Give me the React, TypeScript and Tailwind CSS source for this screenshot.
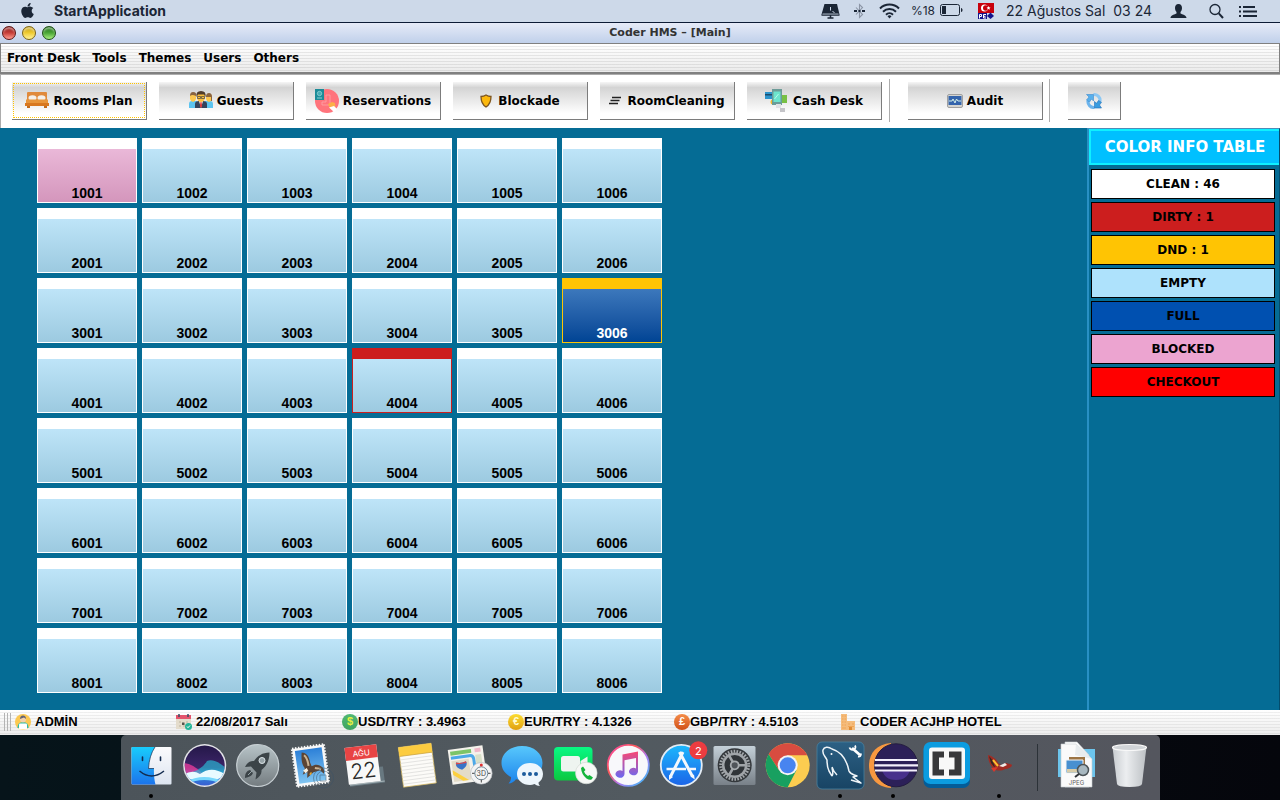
import type { ReactNode } from "react";
import { FaApple, FaBluetoothB } from "react-icons/fa";

const UI = "font-['DejaVu_Sans',Verdana,sans-serif]";

/* ---------- system menu bar ---------- */

function SystemBar() {
  return (
    <header className="flex h-[23px] shrink-0 items-center border-b border-[#0c1b36] bg-[#cdd9e9] pr-[23px] pb-px pl-[19px] font-['Inter',sans-serif] text-[14px] text-[#1b2636]">
      <FaApple className="mr-[18px] size-[17px]" aria-hidden="true" />
      <span className="font-bold">StartApplication</span>
      <div className="ml-auto flex items-center">
        <svg className="mr-[14px] h-4 w-[19px]" viewBox="0 0 19 16" aria-hidden="true">
          <path d="M3.500 1h12.500l2.500 10.500h-18z" fill="#1b2636" />
          <path d="M0.500 12h18M9.500 12v2.500M6.500 15h6" stroke="#1b2636" strokeWidth="1.500" />
          <path d="M9.500 4v3.500M11.500 8l2 2" stroke="#cdd9e9" strokeWidth="1" />
          <path d="M1.500 11h16" stroke="#cdd9e9" strokeWidth=".8" />
        </svg>
        <div className="mr-[14px] flex w-[11px] justify-center">
          <svg className="h-4 w-[11px]" viewBox="0 0 11 16" fill="none" aria-hidden="true">
            <path d="M2 4.500l6.500 7-3 3v-13l3 3-6.500 7" stroke="#8b95a5" strokeWidth="1.100" />
            <path d="M0 8h3M4.500 8h2M8 8h3" stroke="#1b2636" strokeWidth="2" />
          </svg>
        </div>
        <svg className="mr-[11px] h-4 w-[21px]" viewBox="0 0 21 16" fill="none" stroke="#1b2636" strokeWidth="2" aria-hidden="true">
          <path d="M1 5.500a13.500 13.500 0 0 1 19 0M4 8.700a9.300 9.300 0 0 1 13 0M7 11.700a5 5 0 0 1 7 0" />
          <path d="M10.500 15.500l-2-2.300a3 3 0 0 1 4 0z" fill="#1b2636" stroke="none" />
        </svg>
        <span className="mr-[5px] text-[12px]">%18</span>
        <svg className="mr-[15px] h-[13px] w-[23px]" viewBox="0 0 23 13" aria-hidden="true">
          <rect x="0.500" y="0.500" width="19" height="11" rx="2" fill="none" stroke="#1b2636" />
          <rect x="2" y="2" width="4" height="8" fill="#1b2636" />
          <path d="M21 4c2 0 2 4 0 4z" fill="#1b2636" />
        </svg>
        <svg className="mr-3 size-4" viewBox="0 0 16 16" aria-hidden="true">
          <rect width="16" height="10" fill="#c8000c" />
          <circle cx="6.500" cy="5" r="3.500" fill="#fff" />
          <circle cx="7.700" cy="5" r="2.700" fill="#c8000c" />
          <path d="M10.500 3l.6 1.300 1.400.1-1 1 .3 1.400-1.300-.7-1.200.7.3-1.400-1-1 1.300-.1z" fill="#fff" />
          <path d="M0 10h9v6H0z" fill="#14148c" />
          <path d="M9 10h7v6H9z" fill="#cdd9e9" />
          <path d="M1.500 15.500v-4h2v2h-2M8 11.500H5.500v3.500H8M5.500 13.300h2" stroke="#fff" fill="none" />
          <path d="M12.500 9.500l3.500 3.500-3.500 3-3.500-3z" fill="#14148c" />
        </svg>
        <span className="mr-[18px] whitespace-pre">22 Ağustos Sal  03 24</span>
        <svg className="mr-[22px] h-4 w-[17px]" viewBox="0 0 17 16" fill="#1b2636" aria-hidden="true">
          <path d="M8.500 1c2.500 0 3.500 1.700 3.500 4 0 2-.8 3.200-1.500 4v1.500c1.500 1 6 1.500 6 4.500H.500c0-3 4.500-3.500 6-4.500V9C5.800 8.200 5 7 5 5c0-2.300 1-4 3.500-4z" />
        </svg>
        <svg className="mr-[15px] h-4 w-[15px]" viewBox="0 0 15 16" fill="none" stroke="#1b2636" aria-hidden="true">
          <circle cx="6" cy="6.500" r="5" strokeWidth="1.300" />
          <path d="M9.800 10.300L14 15" strokeWidth="2" />
        </svg>
        <svg className="h-4 w-[18px]" viewBox="0 0 18 16" stroke="#1b2636" strokeWidth="2" aria-hidden="true">
          <path d="M0 4h2M0 8.500h2M0 13h2M4 4h12M4 8.500h14M4 13h14" />
        </svg>
      </div>
    </header>
  );
}

/* ---------- window frame ---------- */

const lights = [
  { label: "Close", cls: "from-[#8c1414] via-[#c8403c] to-[#ff9c94] border-[#5c1414]" },
  { label: "Minimize", cls: "from-[#c09a10] via-[#f0cc30] to-[#fff290] border-[#7c6414]" },
  { label: "Zoom", cls: "from-[#1c6c14] via-[#4ca838] to-[#a8f080] border-[#1c4c14]" },
];

function TitleBar() {
  return (
    <div className="flex h-5 shrink-0 items-center bg-linear-to-b from-[#e6ebf8] to-[#c0d0ea]">
      <div className="flex w-[60px] gap-[6px] pl-[2px]">
        {lights.map((l) => (
          <button
            key={l.label}
            aria-label={l.label}
            className={"size-[14px] rounded-full border bg-linear-to-b shadow-[inset_0_3px_2px_-1px_rgba(255,255,255,0.5)] " + l.cls}
          />
        ))}
      </div>
      <h1 className={UI + " flex-1 text-center text-[11px] font-bold text-[#333]"}>Coder HMS – [Main]</h1>
    </div>
  );
}

function MenuBar() {
  return (
    <nav className={UI + " flex h-[31px] shrink-0 items-center gap-3 border-t border-r border-b-2 border-l border-[#808080] bg-[repeating-linear-gradient(to_bottom,transparent_0_2px,rgba(0,0,0,0.08)_2px_3px),linear-gradient(to_bottom,#ffffff,#ebebeb)] px-[6px] text-[12px] font-bold text-black"}>
      {["Front Desk", "Tools", "Themes", "Users", "Others"].map((m) => (
        <button key={m}>{m}</button>
      ))}
    </nav>
  );
}

/* ---------- toolbar ---------- */

const BedIcon = (
  <svg className="h-6 w-6" viewBox="0 0 24 24">
    <path d="M2 4q0-1 1-1h18q1 0 1 1v9H2z" fill="#e08a3c" />
    <ellipse cx="7.500" cy="9" rx="4" ry="2.700" fill="#f4f0ea" />
    <ellipse cx="16.500" cy="9" rx="4" ry="2.700" fill="#f4f0ea" />
    <rect x="1" y="10.500" width="22" height="4" fill="#e8963c" />
    <path d="M0 14h24v3H0z" fill="#d87820" />
    <path d="M2 17h3v2H2zM19 17h3v2h-3z" fill="#c46c1c" />
  </svg>
);

const GuestsIcon = (
  <svg className="h-6 w-6" viewBox="0 0 24 24">
    <path d="M0 19v-4q0-3 3-3h5v7zM24 19v-4q0-3-3-3h-5v7z" fill="#5cc4f0" />
    <path d="M1 7q0-3 3-3t3 3v3q-1 3-3 3t-3-3zM17 8q0-3 3-3t3 3v2q-1 3-3 3t-3-3z" fill="#fcc850" />
    <path d="M1 7q0-4 3-4 4 0 3 4-4-2-6 0zM17 8q0-4 3-4t3 4v4h-1V8h-4z" fill="#8a6440" />
    <path d="M6 19v-4q0-3 4-3h4q4 0 4 3v4z" fill="#34445c" />
    <path d="M10 12h4l-2 7z" fill="#fff" />
    <path d="M11.500 13h1l.7 4-1.200 2-1.200-2z" fill="#d83838" />
    <path d="M8 6q0-3 4-3t4 3v3q-1 4-4 4T8 9z" fill="#fcc040" />
    <path d="M7.500 8q-1-6 4.500-6t4.500 6L15 5.500H9z" fill="#503c2c" />
    <path d="M8.500 7.500h3v2h-3zM12.500 7.500h3v2h-3z" fill="none" stroke="#444" strokeWidth=".7" />
  </svg>
);

const ReservationsIcon = (
  <svg className="h-6 w-6" viewBox="0 0 24 24">
    <circle cx="12" cy="12" r="12" fill="#ff747c" />
    <path d="M11 6h4v10H7v-3h4z" fill="none" stroke="#fca4a8" strokeWidth=".8" />
    <path d="M0 0h9v11H0z" fill="#1c8c98" />
    <circle cx="4.500" cy="4.500" r="2.200" fill="#48acb4" stroke="#b0e0e4" strokeWidth=".6" />
    <path d="M2 9h5" stroke="#8cd0d4" />
    <path d="M13 15l4-2 3 1 .5 5-5 1z" fill="#fcb048" />
    <path d="M14 18.500l5-1.500 3 3-3 3z" fill="#fff" />
  </svg>
);

const ShieldIcon = (
  <svg className="h-6 w-3" viewBox="0 0 12 24">
    <path d="M6 6c1.500 1 3 1.500 5 1.500 0 5-1 8-5 10.500C2 15.500 1 12.500 1 7.500 3 7.500 4.500 7 6 6z" fill="#fcb80c" stroke="#7c5420" strokeWidth="1.300" />
  </svg>
);

const SweepIcon = (
  <svg className="h-6 w-3" viewBox="0 0 12 24" stroke="#222" strokeWidth="1.500">
    <path d="M3 8.500h9M1.500 11.500h9M0 14.500h9" />
  </svg>
);

const CashIcon = (
  <svg className="h-6 w-6" viewBox="0 0 24 24">
    <path d="M0 3h9v7H0z" fill="#2c94cc" />
    <path d="M0 5h9v1.500H0z" fill="#1c4c6c" />
    <circle cx="8" cy="13" r="2.500" fill="#f8b828" />
    <path d="M14 6h8v8h-8z" fill="#78c044" />
    <path d="M7 0h10v16H7z" fill="#6c9c98" />
    <path d="M8.500 2.500h7v10.500h-7z" fill="#6ce4cc" />
    <path d="M9.500 10l4-5" stroke="#b4fcec" />
    <path d="M11 15h5v4h-5z" fill="#e0e0e4" />
    <path d="M15 19h5v4h-5z" fill="#c4c4c8" />
  </svg>
);

const AuditIcon = (
  <svg className="size-4" viewBox="0 0 16 16">
    <rect x=".5" y="1.500" width="15" height="13" rx="1.500" fill="#d4d4d0" stroke="#a0a0a0" />
    <rect x="1.500" y="3" width="13" height="9" fill="#3464ac" />
    <path d="M2 8h3l1-2 2 4 1.500-4L11 8h3" fill="none" stroke="#d4f0e8" />
  </svg>
);

const RefreshIcon = (
  <svg className="size-4" viewBox="0 0 16 16">
    <path d="M7.500 1.500a6 6 0 0 1 6.500 7" fill="none" stroke="#8cc8f4" strokeWidth="3" />
    <path d="M8.500 14.500a6 6 0 0 1-6.500-7" fill="none" stroke="#6cb4ec" strokeWidth="3" />
    <path d="M.5 1.500h7v6.500L5.500 6 3.500 9 .5 7 3 4z" fill="#58b0ec" stroke="#3c8cd0" strokeWidth=".6" />
    <path d="M15.500 15H8.500V8.500l2 1.800 2-2.800 3 1.800-2 2.700z" fill="#389ce0" stroke="#2470b8" strokeWidth=".6" />
  </svg>
);

function ToolButton({ icon, label, focused, gap = "gap-1" }: { icon: ReactNode; label: string; focused?: boolean; gap?: string }) {
  return (
    <button className="flex h-[38px] w-[135px] shrink-0 border-r border-b border-[#7c7c7c] bg-linear-to-b from-[#f6f6f6] via-[#d4d4d4] via-15% to-white to-85% p-px text-[12px] font-bold whitespace-nowrap text-black">
      <span className={"flex h-full w-full items-center justify-center border border-dotted " + gap + " " + (focused ? "border-[#ffc400]" : "border-transparent")}>
        {icon}
        {label}
      </span>
    </button>
  );
}

function Separator() {
  return <div className="-mt-[3px] h-[43px] w-px bg-[#acacac]" />;
}

function Toolbar() {
  return (
    <div className={UI + " flex h-[54px] shrink-0 items-start border-t border-l border-[#acacac] bg-white pt-[7px] pl-[11px]"}>
      <div className="mr-[7px] flex gap-3">
        <ToolButton icon={BedIcon} label="Rooms Plan" focused />
        <ToolButton icon={GuestsIcon} label="Guests" />
        <ToolButton icon={ReservationsIcon} label="Reservations" />
        <ToolButton icon={ShieldIcon} label="Blockade" gap="gap-[6px]" />
        <ToolButton icon={SweepIcon} label="RoomCleaning" gap="gap-[6px]" />
        <ToolButton icon={CashIcon} label="Cash Desk" />
      </div>
      <Separator />
      <div className="mr-[6px] ml-[18px]">
        <ToolButton icon={AuditIcon} label="Audit" />
      </div>
      <Separator />
      <button aria-label="Refresh" className="ml-[18px] flex h-[38px] w-[53px] items-center justify-center border-r border-b border-[#7c7c7c] bg-linear-to-b from-[#f6f6f6] via-[#d4d4d4] via-15% to-white to-85%">
        {RefreshIcon}
      </button>
    </div>
  );
}

/* ---------- rooms ---------- */

const frame: Record<string, string> = { "3006": "border-[#ffc403]", "4004": "border-[#cc1e1e]" };
const fill: Record<string, string> = {
  "1001": "from-[#eab8d8] to-[#d496bc] text-black",
  "3006": "from-[#3c78bc] to-[#004494] text-white",
};

function RoomGrid() {
  return (
    <div className="grid grid-cols-[repeat(6,100px)] content-start gap-[5px] pt-[10px] pl-[37px]">
      {[1, 2, 3, 4, 5, 6, 7, 8].flatMap((floor) =>
        [1, 2, 3, 4, 5, 6].map((n) => {
          const id = String(floor * 1000 + n);
          return (
            <button
              key={id}
              className={
                "flex h-[65px] items-end justify-center border border-t-11 bg-linear-to-b bg-origin-padding font-['Liberation_Sans',Arial,sans-serif] text-[14px] leading-[18px] font-bold " +
                (frame[id] ?? "border-white") + " " + (fill[id] ?? "from-[#bee4f8] to-[#9ccae0] text-black")
              }
            >
              {id}
            </button>
          );
        })
      )}
    </div>
  );
}

const legend = [
  { text: "CLEAN : 46", cls: "bg-white" },
  { text: "DIRTY : 1", cls: "bg-[#cc1e1e]" },
  { text: "DND : 1", cls: "bg-[#ffc403]" },
  { text: "EMPTY", cls: "bg-[#aee2fc]" },
  { text: "FULL", cls: "bg-[#0050b0]" },
  { text: "BLOCKED", cls: "bg-[#eca4d0]" },
  { text: "CHECKOUT", cls: "bg-[#ff0000]" },
];

function ColorInfo() {
  return (
    <aside className="w-[193px] shrink-0 border-t border-r border-l-2 border-t-[#4c8cb8] border-r-[#044c6c] border-l-[#2890c4]">
      <h2 className={UI + " flex h-9 items-center justify-center border-2 border-r-0 border-[#0ff0ff] bg-[#00c0ff] text-[15px] font-bold whitespace-nowrap text-white"}>
        COLOR INFO TABLE
      </h2>
      <ul className={UI + " flex flex-col gap-[3px] pt-1 pr-1 pl-[2px] text-[12px] font-bold text-black"}>
        {legend.map((l) => (
          <li key={l.text} className={"flex h-[30px] items-center justify-center border border-black " + l.cls}>
            {l.text}
          </li>
        ))}
      </ul>
    </aside>
  );
}

/* ---------- status bar ---------- */

function Coin({ from, to, mark, sign }: { from: string; to: string; mark: string; sign: string }) {
  return (
    <span className={"flex size-4 items-center justify-center rounded-full bg-linear-to-b text-[11px] " + from + " " + to + " " + mark}>
      {sign}
    </span>
  );
}

const AdminIcon = (
  <svg className="size-4" viewBox="0 0 16 16">
    <circle cx="8" cy="8" r="8" fill="#fcc850" />
    <path d="M2.500 14q0-6 5.500-6t5.500 6z" fill="#2cbca8" />
    <circle cx="8" cy="5.500" r="3" fill="#f4d0a8" />
    <path d="M5 5q0-3.500 3-3.500T11 5L9 3.500z" fill="#646474" />
    <rect x="4" y="9.500" width="8" height="6" rx="1" fill="#fff" />
  </svg>
);

const CalendarIcon = (
  <svg className="size-4" viewBox="0 0 16 16">
    <rect y="1" width="15" height="14" fill="#e4dccc" />
    <path d="M0 1h15v4H0z" fill="#e4546c" />
    <path d="M3 0v3M12 0v3" stroke="#344c64" strokeWidth="1.500" />
    <path d="M3 8h2M10 8h2M3 12h2M7 12h2" stroke="#d0c8b4" strokeWidth="2" />
    <path d="M6 8.500h2.500v2.500H6z" fill="#54544c" />
    <circle cx="12.500" cy="12.500" r="3.500" fill="#24b498" />
    <path d="M11 12.500l1 1.200 2-2.200" fill="none" stroke="#fff" />
  </svg>
);

const HotelIcon = (
  <svg className="size-4" viewBox="0 0 16 16">
    <path d="M1 0h6v16H1zM7 7h8v9H7z" fill="#f4bc7c" />
    <path d="M2 2h1.500M4.500 2H6M2 5h1.500M4.500 5H6M2 8h1.500M4.500 8H6M2 11h1.500M4.500 11H6M2 14h4M8 10h2M12 10h2M8 12.500h6" stroke="#f0a454" strokeWidth="1.200" />
    <path d="M9 13h3v3H9z" fill="#e08c34" />
  </svg>
);

function StatusItem({ icon, text, tight }: { icon: ReactNode; text: string; tight?: boolean }) {
  return (
    <div className={"flex w-[166px] items-center whitespace-nowrap " + (tight ? "" : "gap-1")}>
      {icon}
      {text}
    </div>
  );
}

function StatusBar() {
  return (
    <footer className="flex h-[25px] shrink-0 items-center bg-[repeating-linear-gradient(to_bottom,transparent_0_2px,rgba(0,0,0,0.06)_2px_3px),linear-gradient(to_bottom,#ffffff,#ececec)] pb-[2px] pl-1 font-['Liberation_Sans',Arial,sans-serif] text-[13px] font-bold text-black">
      <div className="h-[18px] w-[7px] bg-[repeating-linear-gradient(to_right,#b4b4b4_0_1px,transparent_1px_3px)]" />
      <div className="flex w-[165px] items-center gap-1 pl-1">
        {AdminIcon}
        ADMİN
      </div>
      <StatusItem icon={CalendarIcon} text="22/08/2017 Salı" />
      <StatusItem icon={<Coin from="from-[#50b874]" to="to-[#40a460]" mark="text-[#e4f040]" sign="$" />} text="USD/TRY : 3.4963" tight />
      <StatusItem icon={<Coin from="from-[#fcdc30]" to="to-[#e0a010]" mark="text-[#fffbd0]" sign="€" />} text="EUR/TRY : 4.1326" tight />
      <StatusItem icon={<Coin from="from-[#f48c48]" to="to-[#d05014]" mark="text-white" sign="£" />} text="GBP/TRY : 4.5103" tight />
      <StatusItem icon={HotelIcon} text="CODER ACJHP HOTEL" />
    </footer>
  );
}

/* ---------- dock ---------- */

const perforation = "M-16-19h32M16-19v38M16 19h-32M-16 19v-38";

const apps: { name: string; running?: boolean; art: ReactNode }[] = [
  {
    name: "Finder",
    running: true,
    art: (
      <>
        <defs>
          <linearGradient id="fi" x2="0" y2="1"><stop stopColor="#18ccfc" /><stop offset="1" stopColor="#1c74ec" /></linearGradient>
          <linearGradient id="fw" x2="0" y2="1"><stop stopColor="#fbfbfd" /><stop offset="1" stopColor="#dce4f0" /></linearGradient>
        </defs>
        <rect x="6.500" y="12" width="40" height="37.500" rx="1" fill="url(#fw)" />
        <path d="M7.500 12H30c-4 6-6 13-6.500 21.500H29c-.3 6 .2 11 1.500 16h-23q-1 0-1-1V13q0-1 1-1z" fill="url(#fi)" />
        <path d="M17.500 22v3.500M35.500 22v3.500" stroke="#142c50" strokeWidth="1.600" strokeLinecap="round" />
        <path d="M14.500 36q12 10 24.500 0" fill="none" stroke="#142c50" strokeWidth="1.500" />
        <path d="M30 12c-4 6-6 13-6.500 21.500H29" fill="none" stroke="#142c50" strokeWidth=".7" />
      </>
    ),
  },
  {
    name: "Siri",
    art: (
      <>
        <defs>
          <linearGradient id="si" x2="0" y2="1">
            <stop offset=".15" stopColor="#241848" /><stop offset=".5" stopColor="#3c2468" /><stop offset=".62" stopColor="#2c88d8" /><stop offset=".8" stopColor="#3c58d0" />
          </linearGradient>
          <clipPath id="sc"><circle cx="26.700" cy="30.500" r="20" /></clipPath>
        </defs>
        <circle cx="26.700" cy="30.500" r="21.500" fill="#e4e4e8" />
        <g clipPath="url(#sc)">
          <path d="M0 0h53v65H0z" fill="url(#si)" />
          <path d="M5 28q10 0 21 12H5z" fill="#f03c9c" opacity=".75" />
          <path d="M5 39q18-2 24-13 8-3 20 8v8z" fill="#28c0dc" opacity=".65" />
          <path d="M5 40q9-6 17-1 12-9 26 1-12 8-25 3-9 5-18-3z" fill="#e8faff" />
          <path d="M8 48q18-9 37 0" stroke="#78d8fc" strokeWidth="3" fill="none" />
        </g>
      </>
    ),
  },
  {
    name: "Launchpad",
    art: (
      <>
        <defs><linearGradient id="la" x2="0" y2="1"><stop stopColor="#b8c4c8" /><stop offset="1" stopColor="#747c80" /></linearGradient></defs>
        <circle cx="26.700" cy="30.500" r="21" fill="url(#la)" stroke="#c8d0d4" strokeWidth="1.200" />
        <path d="M38.500 17.500c-7 0-12 3.500-15.500 8.500-4-.5-7 2-9 6l6-.5 5.500 6-1 7c4-2.500 6.500-5.500 6-9.500 5-4 8-9.500 8-17.500z" fill="#3c4448" />
        <circle cx="31" cy="25.500" r="3" fill="#98a4a8" stroke="#dce4e8" strokeWidth="1" />
        <path d="M19 35c-4 1-5 4-5 8 4-1 7-2 8-5z" fill="#3c4448" />
        <path d="M17 40l4-4" stroke="#98a4a8" />
      </>
    ),
  },
  {
    name: "Mail",
    art: (
      <>
        <defs><linearGradient id="ma" x2="0" y2="1"><stop stopColor="#2c80d8" /><stop offset="1" stopColor="#80c4f0" /></linearGradient></defs>
        <g transform="translate(26.500 30.500) rotate(-8)">
          <path d="M-16-19h32v38h-32z" fill="#f8f8f8" />
          <path d={perforation} fill="none" stroke="#f8f8f8" strokeWidth="2.500" strokeDasharray="1.500 1.500" />
          <path d="M-13.500-16.500h27v33h-27z" fill="url(#ma)" />
          <path d="M-7-14c5 1 7 5 7 11l1 4c4-2 8-1 11 3 1 2 1 4 0 6l-3-4-7 1-7 5 1-6-5 2 3-6C-9-3-8-9-7-14z" fill="#5c4434" />
          <path d="M-5-11c3 3 3 7 3 11M4 3l6 2" stroke="#ccb494" strokeWidth="2" fill="none" />
          <path d="M-8 4l4-2 1 3-3 2z" fill="#f8f0e0" />
          <path d="M-2 9l2-2" stroke="#e8a830" strokeWidth="1.500" />
        </g>
        <g fill="none" stroke="#3c5468" strokeWidth="1" opacity=".5"><circle cx="39.500" cy="43" r="10" /><circle cx="39.500" cy="43" r="7" /><path d="M36 40h6v6h-6z" /></g>
      </>
    ),
  },
  {
    name: "Calendar",
    art: (
      <g transform="translate(25.500 29) rotate(-7)">
        <path d="M-15 3L-15 21H20V5z" fill="#687880" />
        <path d="M-15 19.500h35" stroke="#a8b4b8" />
        <path d="M-16-18h32v37h-32z" fill="#f8f8f8" />
        <path d="M-16-18h32v13h-32z" fill="#e84444" />
        <text y="-8" textAnchor="middle" className="font-['Inter',sans-serif] text-[8px]" fill="#fff">AĞU</text>
        <text y="14" textAnchor="middle" className="font-['Inter',sans-serif] text-[21px] font-light" fill="#282828">22</text>
      </g>
    ),
  },
  {
    name: "Notes",
    art: (
      <g transform="translate(26.800 30.300) rotate(-7.500)">
        <path d="M-16-20h33v40h-33z" fill="#fcfbf8" stroke="#d4b458" strokeWidth=".7" />
        <path d="M-16-20h33v9h-33z" fill="#fccc40" />
        <path d="M-16-11h33" stroke="#c8a040" strokeWidth=".7" />
        <path d="M-16-7.500h33M-16-4h33M-16-.5h33M-16 3h33M-16 6.500h33M-16 10h33M-16 13.500h33M-16 17h33" stroke="#d4d4d2" strokeWidth=".6" />
      </g>
    ),
  },
  {
    name: "Maps",
    art: (
      <>
        <g transform="translate(24.500 30) rotate(-8)">
          <path d="M-17.500-17.500h35v35h-35z" fill="#f4f2ec" />
          <path d="M-15.500-15.500h21v4h-21z" fill="#7cc468" />
          <path d="M9-15.500h6v4H9z" fill="#f0b8c8" />
          <path d="M-15.500-9H3q4 0 4 4v20" fill="none" stroke="#4ca8e8" strokeWidth="3" />
          <path d="M-15.500-6H2v21h-17.500z" fill="#e4dcc8" />
          <path d="M-15.500 3l15 12h-6l-9-7z" fill="#fcd040" />
          <path d="M9-9h6v24H9z" fill="#d8e0c8" />
          <path d="M-11-4q5 2 10 0 2 5-5 8-7-3-5-8z" fill="#3874c8" />
          <path d="M-11-4q5 2 10 0l.3 2h-10.600z" fill="#e04848" />
        </g>
        <circle cx="38.300" cy="38.300" r="10.800" fill="#f4f4f4" stroke="#b8bcc0" strokeWidth=".7" />
        <circle cx="38.300" cy="38.300" r="6.500" fill="none" stroke="#708898" />
        <path d="M38.300 44.500v3M29 38.300h2.500M45 38.300h2.500" stroke="#444" />
        <circle cx="38.300" cy="30" r="1.500" fill="#e03030" />
        <text x="38.300" y="41" textAnchor="middle" className="font-['Inter',sans-serif] text-[7px]" fill="#444">3D</text>
      </>
    ),
  },
  {
    name: "Messages",
    art: (
      <>
        <defs><linearGradient id="me" x2="0" y2="1"><stop stopColor="#58c8fc" /><stop offset="1" stopColor="#1c84ec" /></linearGradient></defs>
        <path d="M26 11c12 0 20.500 7.500 20.500 17S38 45 26 45q-3 0-6-.8-3 4-7.500 4.300 3-3 2.500-6.500C9 39 5.500 34 5.500 28 5.500 18.500 14 11 26 11z" fill="url(#me)" />
        <path d="M34 28c7.500 0 13 4.700 13 11 0 4-2 7-4.500 8.500 0 1.500.5 2.500 1.500 3.500-2 0-4-.8-5.500-2-1.500.6-3 1-4.500 1-7.500 0-13-4.700-13-11s5.500-11 13-11z" fill="#eef6fc" />
        <g fill="#1c5c9c"><circle cx="28" cy="39" r="2" /><circle cx="34" cy="39" r="2" /><circle cx="40" cy="39" r="2" /></g>
      </>
    ),
  },
  {
    name: "FaceTime",
    art: (
      <>
        <defs><linearGradient id="ft" x2="0" y2="1"><stop stopColor="#08f884" /><stop offset="1" stopColor="#0cc840" /></linearGradient></defs>
        <rect x="5" y="12" width="38.500" height="33.500" rx="4" fill="url(#ft)" />
        <rect x="12" y="21" width="19" height="15.500" rx="2.500" fill="#eef4f0" />
        <path d="M31.500 26l7-4.500v9h-7z" fill="#eef4f0" />
        <circle cx="37.300" cy="38" r="10.800" fill="#f6f8f6" stroke="#ccd4cc" strokeWidth=".6" />
        <path d="M32 33l2-1.500 2.500 3.500-1.500 1.500q1 3 4 4.500l1.500-1 3.500 2.500-1.500 2q-2 1-5-1-5-4-5.500-10.500z" fill="#14b43c" />
      </>
    ),
  },
  {
    name: "iTunes",
    art: (
      <>
        <defs>
          <linearGradient id="it" x1="0" y1="0" x2="1" y2="1"><stop stopColor="#f848b0" /><stop offset=".35" stopColor="#fc5858" /><stop offset=".6" stopColor="#b078f0" /><stop offset="1" stopColor="#28c8f8" /></linearGradient>
          <linearGradient id="in" x2="0" y2="1"><stop stopColor="#f84874" /><stop offset="1" stopColor="#6c68f0" /></linearGradient>
        </defs>
        <circle cx="26.300" cy="30.300" r="20.500" fill="#f8f8fb" stroke="url(#it)" strokeWidth="1.800" />
        <path d="M20.500 19.500L36 16.500V36.500a4.500 3.700 0 1 1-2-3V23l-11.500 2.300V39a4.500 3.700 0 1 1-2-3z" fill="url(#in)" />
      </>
    ),
  },
  {
    name: "App Store",
    art: (
      <>
        <defs><linearGradient id="as" x2="0" y2="1"><stop stopColor="#1cb8fc" /><stop offset="1" stopColor="#1c64e8" /></linearGradient></defs>
        <circle cx="26.300" cy="30.300" r="20.500" fill="url(#as)" stroke="#e4ecf4" strokeWidth="1.800" />
        <path d="M28 17L15.500 41.500M24.500 17L37.500 41.500" stroke="#f4f8fc" strokeWidth="3" />
        <path d="M11.500 34h19.500M34.500 34H41" stroke="#f4f8fc" strokeWidth="2.500" />
        <path d="M14 40l4 2-4 3zM35.500 41.500l3.500-2 .8 5z" fill="#f4f8fc" />
        <circle cx="43.300" cy="15.300" r="9" fill="#ec3c40" />
        <text x="43.300" y="19.500" textAnchor="middle" className="font-['Inter',sans-serif] text-[11px]" fill="#fff">2</text>
      </>
    ),
  },
  {
    name: "System Preferences",
    art: (
      <>
        <defs><linearGradient id="sp" x2="0" y2="1"><stop stopColor="#c4d0d8" /><stop offset="1" stopColor="#788088" /></linearGradient></defs>
        <rect x="5.500" y="11" width="42" height="39" rx="1.500" fill="url(#sp)" />
        <circle cx="26.700" cy="30.300" r="17" fill="#34383c" />
        <circle cx="26.700" cy="30.300" r="14" fill="none" stroke="#a4a8ac" strokeWidth="3" strokeDasharray="1.600 1.330" />
        <circle cx="26.700" cy="30.300" r="11.500" fill="#303438" stroke="#a0a4a8" strokeWidth="2.500" />
        <path d="M26.700 30.300H39M26.700 30.300L20.500 19.700M26.700 30.300L20.500 41" stroke="#a0a4a8" strokeWidth="2.600" />
        <circle cx="26.700" cy="30.300" r="4" fill="#50545a" stroke="#a8acb0" strokeWidth="1.800" />
      </>
    ),
  },
  {
    name: "Chrome",
    art: (
      <>
        <circle cx="26.700" cy="30.300" r="22" fill="#fccc50" />
        <path d="M26.700 20.300H46.300A22 22 0 0 0 7.650 19.300L18 35.300z" fill="#d84c40" />
        <path d="M7.650 19.300A22 22 0 0 0 26.700 52.300L35.400 35.300 18 35.300z" fill="#18a060" />
        <circle cx="26.700" cy="30.300" r="10" fill="#f4f4f4" />
        <circle cx="26.700" cy="30.300" r="8" fill="#4884f0" />
      </>
    ),
  },
  {
    name: "MySQL Workbench",
    running: true,
    art: (
      <>
        <defs><linearGradient id="my" x2="0" y2="1"><stop stopColor="#2c6084" /><stop offset="1" stopColor="#184464" /></linearGradient></defs>
        <rect x="3" y="7" width="47" height="47" rx="5" fill="url(#my)" stroke="#4880a0" strokeWidth=".8" />
        <path d="M18 41l-3-5c-2-4-2-7-2-11-2-4-5-6-4-10 1-3 5-4 9-1 10 3 15 12 17 22 1 3 3 3 8 5l-4 1 8 6-10-3M18 32c1 4 3 6 5 8M18 41c1-1 1-4 0-8" fill="none" stroke="#eef4f8" strokeWidth="1.500" strokeLinejoin="round" />
        <circle cx="17.500" cy="19" r="1" fill="#fff" />
        <path d="M38 13l8 7" stroke="#fff" strokeWidth="2.800" />
        <path d="M35.500 12.500q1 3 4 2t1.500-4M44 21.500q3 .5 3-3" fill="none" stroke="#fff" strokeWidth="1.800" />
      </>
    ),
  },
  {
    name: "Eclipse",
    running: true,
    art: (
      <>
        <path d="M24 8C9 9 2 19 2 30.500S9 52 24 53z" fill="#f89840" />
        <circle cx="29" cy="30.300" r="21.500" fill="#2c2058" stroke="#241c40" strokeWidth="1" />
        <path d="M15 35h28c-2 7-7 10-14 10s-12-3-14-10z" fill="#48308c" />
        <path d="M8 25h42M7.500 30.300h43.500M8 35.500h42" stroke="#f4f0fc" strokeWidth="2.200" />
      </>
    ),
  },
  {
    name: "Brackets",
    art: (
      <>
        <rect x="3.500" y="9" width="46.500" height="44" rx="7" fill="#045c98" />
        <rect x="3.500" y="7" width="46.500" height="42" rx="7" fill="#0c9ce0" />
        <rect x="9" y="12.500" width="36" height="31.500" rx="3" fill="#f8f8f8" />
        <path d="M12.500 16.500H24v6h-5v12h5v6H12.500zM41.500 16.500H29v6h5.500v12H29v6h12.500z" fill="#38383a" />
      </>
    ),
  },
  {
    name: "StartApplication",
    running: true,
    art: (
      <>
        <path d="M15 20c4 1 9 4 10 8l3 2c3 0 3-2 5-2 2 1 6 1 6 2 0 2-4 4-7 4-3 2-8 2-11 0-4-3-6-9-6-14z" fill="#a02c24" />
        <path d="M16 21c3 3 5 7 6 12l-4-5z" fill="#342820" />
        <path d="M20 25l5 6" stroke="#fcc030" strokeWidth="2" />
        <path d="M26 31l6-3 2 2-4 2z" fill="#f0ece8" />
        <path d="M18 33l7-1-4 5z" fill="#d8382c" />
      </>
    ),
  },
];

const places: { name: string; art: ReactNode }[] = [
  {
    name: "Downloads",
    art: (
      <>
        <path d="M8 14h37v28H8z" fill="#6cc4ec" />
        <path d="M15 7h12l12 13v32H15z" fill="#fff" stroke="#c8ccd0" strokeWidth=".6" />
        <path d="M11 9h15l16 15v28H11z" fill="#fafafa" stroke="#c8ccd0" strokeWidth=".6" />
        <path d="M26 9l-1 11 17 4z" fill="#e8ecee" />
        <path d="M19 22h16v13H19z" fill="#9c7444" />
        <path d="M16 25h17v13H16z" fill="#4890d0" stroke="#f4f4f4" />
        <path d="M17 34h15v3.500H17z" fill="#d8cca8" />
        <circle cx="33" cy="35" r="5.500" fill="#a8b8c0" stroke="#4c5458" strokeWidth="1.500" />
        <path d="M29 39l-4 3" stroke="#303438" strokeWidth="2" />
        <text x="26.500" y="50" textAnchor="middle" className="font-['Inter',sans-serif] text-[6px]" fill="#606060">JPEG</text>
      </>
    ),
  },
  {
    name: "Trash",
    art: (
      <>
        <defs><linearGradient id="tr"><stop stopColor="#c8ccd0" /><stop offset=".4" stopColor="#eceef0" /><stop offset="1" stopColor="#bcc0c4" /></linearGradient></defs>
        <path d="M9.500 12h34l-4.500 37q-.5 3-12.500 3T14 49z" fill="url(#tr)" />
        <ellipse cx="26.500" cy="12.500" rx="17" ry="3" fill="#d0d4d8" stroke="#f8f8f8" strokeWidth="1.200" />
      </>
    ),
  },
];

function DockItem({ name, art, running }: { name: string; art: ReactNode; running?: boolean }) {
  return (
    <button aria-label={name} className="h-[65px] w-[53px] shrink-0">
      <svg className="h-[65px] w-[53px]" viewBox="0 0 53 65" aria-hidden="true">
        {art}
        {running && <circle cx="26" cy="61" r="2" fill="#000" />}
      </svg>
    </button>
  );
}

function Dock() {
  return (
    <div className="flex shrink-0 justify-center overflow-hidden bg-linear-to-r from-[#06141a] via-[#060f14] to-[#05060c]">
      <div className="flex rounded-t-[5px] bg-linear-to-r from-[#4c545a] via-[#525a60] to-[#54565e] px-1">
        {apps.map((a) => (
          <DockItem key={a.name} {...a} />
        ))}
        <div className="flex w-6 items-center justify-center">
          <div className="h-[47px] w-px bg-[#2c3238]" />
        </div>
        {places.map((p) => (
          <DockItem key={p.name} {...p} />
        ))}
      </div>
    </div>
  );
}

export default function App() {
  return (
    <div className="flex min-h-screen flex-col bg-[#056c95]">
      <SystemBar />
      <TitleBar />
      <MenuBar />
      <Toolbar />
      <main className="flex flex-1 justify-between">
        <RoomGrid />
        <ColorInfo />
      </main>
      <StatusBar />
      <Dock />
    </div>
  );
}
